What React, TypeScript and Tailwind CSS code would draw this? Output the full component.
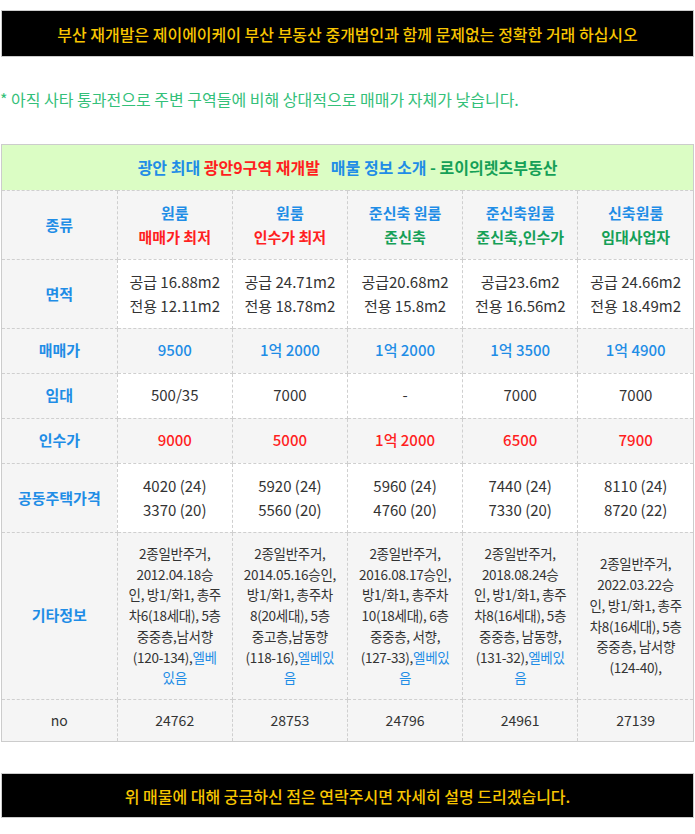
import React from 'react'

const blue = 'text-[#1f8de6]'
const red = 'text-[#ff1f1f]'
const green = 'text-[#15a057]'

const cell = 'border border-dashed border-[#cfcfcf] text-center align-middle px-1'
const labelCell = `${cell} bg-[#f5f5f5] font-bold text-[15px] ${blue}`

type Etc = { lines: string[]; tail?: string; tailLine?: string; extra?: string }

const etcInfo: Etc[] = [
	{ lines: ['2종일반주거,', '2012.04.18승', '인, 방1/화1, 총주', '차6(18세대), 5층', '중중층,남서향'], tail: '(120-134),', tailLine: '엘베', extra: '있음' },
	{ lines: ['2종일반주거,', '2014.05.16승인,', '방1/화1, 총주차', '8(20세대), 5층', '중고층,남동향'], tail: '(118-16),', tailLine: '엘베있', extra: '음' },
	{ lines: ['2종일반주거,', '2016.08.17승인,', '방1/화1, 총주차', '10(18세대), 6층', '중중층, 서향,'], tail: '(127-33),', tailLine: '엘베있', extra: '음' },
	{ lines: ['2종일반주거,', '2018.08.24승', '인, 방1/화1, 총주', '차8(16세대), 5층', '중중층, 남동향,'], tail: '(131-32),', tailLine: '엘베있', extra: '음' },
	{ lines: ['2종일반주거,', '2022.03.22승', '인, 방1/화1, 총주', '차8(16세대), 5층', '중중층, 남서향', '(124-40),'] },
]

const App: React.FC = () => {
	return (
		<div className="w-[695px] bg-white text-[#333] pt-[10px]" style={{ fontFamily: '"Noto Sans CJK KR", "Noto Sans", sans-serif' }}>
			<div className="mx-px h-[47px] bg-black border border-[#cccccc] flex items-center justify-center text-[16px] font-medium text-[#f7c500]">
				부산 재개발은 제이에이케이 부산 부동산 중개법인과 함께 문제없는 정확한 거래 하십시오
			</div>

			<p className="mt-[31px] text-[16px] text-[#33c079] leading-[22px]">* 아직 사타 통과전으로 주변 구역들에 비해 상대적으로 매매가 자체가 낮습니다.</p>

			<div className="mt-[34px] mx-px border border-[#cccccc]">
				<table className="w-full table-fixed border-collapse border-hidden">
					<tbody>
						<tr className="h-[45px] bg-[#dbfdc4]">
							<td colSpan={6} className={`${cell} font-bold text-[16px]`}>
								<span className={blue}>광안 최대 </span>
								<span className={red}>광안9구역 재개발</span>
								<span className={blue}>&nbsp;&nbsp; 매물 정보 소개 </span>
								<span className={green}>- 로이의렛츠부동산</span>
							</td>
						</tr>
						<tr className="h-[69px] bg-[#f5f5f5] font-bold text-[15px] leading-[24px]">
							<td className={labelCell}>종류</td>
							<td className={cell}><div className={blue}>원룸</div><div className={red}>매매가 최저</div></td>
							<td className={cell}><div className={blue}>원룸</div><div className={red}>인수가 최저</div></td>
							<td className={cell}><div className={blue}>준신축 원룸</div><div className={green}>준신축</div></td>
							<td className={cell}><div className={blue}>준신축원룸</div><div className={`${green} whitespace-nowrap`}>준신축,인수가</div></td>
							<td className={cell}><div className={blue}>신축원룸</div><div className={green}>임대사업자</div></td>
						</tr>
						<tr className="h-[69px] bg-white text-[15px] leading-[24px]">
							<td className={labelCell}>면적</td>
							<td className={cell}>공급 16.88m2<br />전용 12.11m2</td>
							<td className={cell}>공급 24.71m2<br />전용 18.78m2</td>
							<td className={`${cell} whitespace-nowrap`}>공급20.68m2<br />전용 15.8m2</td>
							<td className={`${cell} whitespace-nowrap`}>공급23.6m2<br />전용 16.56m2</td>
							<td className={`${cell} whitespace-nowrap`}>공급 24.66m2<br />전용 18.49m2</td>
						</tr>
						<tr className={`h-[45px] bg-[#f5f5f5] text-[15px] font-medium ${blue}`}>
							<td className={labelCell}>매매가</td>
							<td className={cell}>9500</td>
							<td className={cell}>1억 2000</td>
							<td className={cell}>1억 2000</td>
							<td className={cell}>1억 3500</td>
							<td className={cell}>1억 4900</td>
						</tr>
						<tr className="h-[45px] bg-white text-[15px]">
							<td className={labelCell}>임대</td>
							<td className={cell}>500/35</td>
							<td className={cell}>7000</td>
							<td className={cell}>-</td>
							<td className={cell}>7000</td>
							<td className={cell}>7000</td>
						</tr>
						<tr className={`h-[45px] bg-[#f5f5f5] text-[15px] font-medium ${red}`}>
							<td className={labelCell}>인수가</td>
							<td className={cell}>9000</td>
							<td className={cell}>5000</td>
							<td className={cell}>1억 2000</td>
							<td className={cell}>6500</td>
							<td className={cell}>7900</td>
						</tr>
						<tr className="h-[69px] bg-white text-[15px] leading-[24px]">
							<td className={labelCell}>공동주택가격</td>
							<td className={cell}>4020 (24)<br />3370 (20)</td>
							<td className={cell}>5920 (24)<br />5560 (20)</td>
							<td className={cell}>5960 (24)<br />4760 (20)</td>
							<td className={cell}>7440 (24)<br />7330 (20)</td>
							<td className={cell}>8110 (24)<br />8720 (22)</td>
						</tr>
						<tr className="h-[167px] bg-[#f5f5f5] text-[13.5px] leading-[20.7px]">
							<td className={labelCell}>기타정보</td>
							{etcInfo.map((e, i) => (
								<td key={i} className={`${cell} whitespace-nowrap tracking-[-0.3px]`}>
									{e.lines.map((l, j) => (
										<div key={j}>{l}</div>
									))}
									{e.tail && (
										<div>
											{e.tail}
											<span className={blue}>{e.tailLine}</span>
										</div>
									)}
									{e.extra && <div className={blue}>{e.extra}</div>}
								</td>
							))}
						</tr>
						<tr className="h-[42px] bg-[#f5f5f5] text-[14px]">
							<td className={cell}>no</td>
							<td className={cell}>24762</td>
							<td className={cell}>28753</td>
							<td className={cell}>24796</td>
							<td className={cell}>24961</td>
							<td className={cell}>27139</td>
						</tr>
					</tbody>
				</table>
			</div>

			<div className="mt-[31px] mx-px h-[45px] bg-black border border-[#cccccc] flex items-center justify-center text-[16px] font-medium text-[#f7c500]">
				위 매물에 대해 궁금하신 점은 연락주시면 자세히 설명 드리겠습니다.
			</div>
			<div className="h-[18px]" />
		</div>
	)
}

export default App
